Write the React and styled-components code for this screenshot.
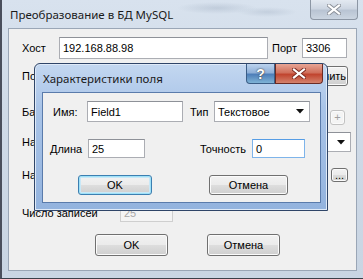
import React from "react";
import styled, { createGlobalStyle, css } from "styled-components";

const Global = createGlobalStyle`
  html, body { margin: 0; padding: 0; background: #2a2f3a; }
  body { width: 363px; height: 279px; overflow: hidden; }
  * { box-sizing: border-box; }
`;

const UI = `"Liberation Sans", Arial, sans-serif`;
const TITLE = `"Noto Sans", "Open Sans", sans-serif`;

const Window = styled.div`
  position: relative;
  width: 363px;
  height: 279px;
  display: flex;
  flex-direction: column;
  padding: 0 6px 7px 6px;
  background:
    radial-gradient(ellipse 40px 6px at 215px 8px, rgba(150,165,185,0.35), transparent),
    radial-gradient(ellipse 30px 5px at 265px 12px, rgba(150,165,185,0.3), transparent),
    linear-gradient(180deg, #d8e2ee 0%, #cfdae7 40%, #c9d5e3 100%);
  border-left: 2px solid #4a4f5c;
  border-bottom: 1px solid #3a3f4a;
`;

const TitleBar = styled.div`
  height: 28px;
  display: flex;
  align-items: center;
  font-family: ${TITLE};
  font-size: 11.5px;
  color: #1a1a1a;
`;

const TitleText = styled.span`
  margin-left: ${(p) => p.$ml || 0}px;
  white-space: nowrap;
`;

const CaptionBtn = styled.div`
  position: absolute;
  top: ${(p) => p.$top || 0}px;
  right: ${(p) => p.$right}px;
  width: ${(p) => p.$w}px;
  height: 20px;
  border: 1px solid ${(p) => (p.$kind === "close" ? "#6b2b23" : p.$kind === "help" ? "#3b5d86" : "#8c96a4")};
  border-top: none;
  border-radius: ${(p) => p.$radius || "0 0 4px 4px"};
  display: flex;
  align-items: center;
  justify-content: center;
  font-family: ${UI};
  font-weight: bold;
  font-size: 14px;
  color: #fff;
  ${(p) =>
    p.$kind === "close"
      ? css`background: linear-gradient(180deg, #e8a595 0%, #d0705c 45%, #c1452f 55%, #d4826c 100%);`
      : p.$kind === "help"
      ? css`background: linear-gradient(180deg, #bcd3ee 0%, #8fb0d8 45%, #4e7fb9 55%, #7fb3d6 100%);`
      : css`background: linear-gradient(180deg, #e3e9f1 0%, #cdd6e2 45%, #b9c4d3 55%, #cbd5e1 100%);`}
  text-shadow: 0 0 2px #555, 0 0 1px #333;
`;

const XIcon = ({ color = "#fff", stroke = "#6a6a6a" }) => (
  <svg width="14" height="11" viewBox="0 0 14 11">
    <path d="M2 1.5 L12 9.5 M12 1.5 L2 9.5" stroke={stroke} strokeWidth="4" strokeLinecap="square" />
    <path d="M2 1.5 L12 9.5 M12 1.5 L2 9.5" stroke={color} strokeWidth="2.2" strokeLinecap="square" />
  </svg>
);

const Client = styled.div`
  flex: 1;
  background: #f0f0f0;
  border: 1px solid #9aa6b6;
  display: flex;
  flex-direction: column;
  padding: 8px 0 0 0;
  font-family: ${UI};
  font-size: 11px;
  color: #000;
`;

const Row = styled.div`
  display: flex;
  align-items: center;
  height: ${(p) => p.$h || 22}px;
  margin-top: ${(p) => p.$mt || 0}px;
  padding-left: ${(p) => p.$pl || 0}px;
`;

const Label = styled.span`
  width: ${(p) => (p.$w ? p.$w + "px" : "auto")};
  margin-left: ${(p) => p.$ml || 0}px;
  white-space: nowrap;
  flex: none;
  color: ${(p) => (p.$disabled ? "#6d6d6d" : "#000")};
`;

const Input = styled.div`
  width: ${(p) => p.$w}px;
  height: ${(p) => p.$h || 20}px;
  margin-left: ${(p) => p.$ml || 0}px;
  flex: none;
  background: ${(p) => (p.$disabled ? "#f4f4f4" : "#fff")};
  border: 1px solid ${(p) => (p.$focus ? "#7eb4ea" : p.$disabled ? "#cfcfcf" : "#abadb3")};
  border-top-color: ${(p) => (p.$focus ? "#569de5" : p.$disabled ? "#cfcfcf" : "#8e9198")};
  display: flex;
  align-items: center;
  padding-left: 3px;
  font-family: ${UI};
  font-size: ${(p) => p.$fs || 11}px;
  color: ${(p) => (p.$disabled ? "#a8a8a8" : "#000")};
  white-space: nowrap;
  overflow: hidden;
`;

const Combo = styled(Input)`
  justify-content: space-between;
  padding-right: 5px;
`;

const Arrow = () => (
  <svg width="8" height="5" viewBox="0 0 8 5">
    <path d="M0 0 L8 0 L4 4.5 Z" fill="#111" />
  </svg>
);

const Button = styled.div`
  width: ${(p) => p.$w}px;
  height: ${(p) => p.$h || 21}px;
  margin-left: ${(p) => p.$ml || 0}px;
  margin-top: ${(p) => p.$mt || 0}px;
  flex: none;
  display: flex;
  align-items: center;
  justify-content: center;
  border: 1px solid ${(p) => (p.$default ? "#3c7fb1" : p.$disabled ? "#c2c2c2" : "#707070")};
  border-radius: 3px;
  background: ${(p) =>
    p.$disabled
      ? "#f4f4f4"
      : "linear-gradient(180deg, #f2f2f2 0%, #ebebeb 48%, #dddddd 52%, #cfcfcf 100%)"};
  box-shadow: ${(p) => (p.$default ? "inset 0 0 0 1px #48d6fb55, inset 0 0 0 2px #c9e8f7" : "inset 0 0 0 1px #fbfbfb")};
  font-family: ${UI};
  font-size: 11px;
  color: ${(p) => (p.$disabled ? "#a0a0a0" : "#000")};
  white-space: nowrap;
  overflow: hidden;
`;

/* Inner floating dialog */
const Dialog = styled.div`
  position: absolute;
  left: 32px;
  top: 63px;
  width: 294px;
  height: 148px;
  display: flex;
  flex-direction: column;
  padding: 0 6px 7px 7px;
  background: linear-gradient(180deg, #c3d7f0 0%, #a9c4e8 30%, #93b3de 100%);
  border: 1px solid #2f4568;
  border-radius: 6px 6px 0 0;
  box-shadow: inset 0 0 0 1px #dfeaf8;
`;

const DialogClient = styled.div`
  flex: 1;
  background: #f0f0f0;
  border: 1px solid #5a7bab;
  display: flex;
  flex-direction: column;
  font-family: ${UI};
  font-size: 11px;
  color: #000;
`;

export default function App() {
  return (
    <>
      <Global />
      <Window>
        <TitleBar>
          <TitleText $ml={2}>Преобразование в БД MySQL</TitleText>
        </TitleBar>
        <CaptionBtn $kind="inactive" $right={5} $w={48}>
          <XIcon color="#fff" stroke="#8a8f98" />
        </CaptionBtn>
        <Client>
          <Row $pl={13}>
            <Label $w={37}>Хост</Label>
            <Input $w={209} $h={22}>192.168.88.98</Input>
            <Label $ml={4}>Порт</Label>
            <Input $w={45} $ml={5}>3306</Input>
          </Row>
          <Row $mt={6} $pl={13}>
            <Label $w={100}>Пользователь</Label>
            <Input $w={120} />
            <Button $w={66} $h={20} $ml={40}>Подключить</Button>
          </Row>
          <Row $mt={14} $pl={13}>
            <Label $w={100}>База данных</Label>
            <Combo $w={180}><span /><Arrow /></Combo>
            <Button $w={15} $h={15} $ml={28} $mt={10} $disabled>+</Button>
          </Row>
          <Row $mt={8} $pl={13}>
            <Label $w={100}>Наименование таблицы</Label>
            <Combo $w={229}>
              <span />
              <Arrow />
            </Combo>
          </Row>
          <Row $mt={11} $pl={13}>
            <Label $w={100}>Наименование поля</Label>
            <Input $w={205} />
            <Button $w={17} $h={14} $ml={4}>...</Button>
          </Row>
          <Row $mt={16} $pl={13}>
            <Label $w={98}>Число записей</Label>
            <Input $w={53} $h={18} $disabled>25</Input>
          </Row>
          <Row $mt={10} $pl={86}>
            <Button $w={73} $h={22}>OK</Button>
            <Button $w={73} $h={22} $ml={39}>Отмена</Button>
          </Row>
        </Client>

        <Dialog>
          <TitleBar>
            <TitleText $ml={1}>Характеристики поля</TitleText>
          </TitleBar>
          <CaptionBtn $kind="help" $right={52} $w={29} $radius="0 0 0 4px">?</CaptionBtn>
          <CaptionBtn $kind="close" $right={4} $w={48} $radius="0 0 4px 0">
            <XIcon color="#fff" stroke="#7a2a20" />
          </CaptionBtn>
          <DialogClient>
            <Row $mt={8} $pl={10} $h={21}>
              <Label $w={34}>Имя:</Label>
              <Input $w={96} $h={21}>Field1</Input>
              <Label $ml={7} $w={24}>Тип</Label>
              <Combo $w={96} $h={21}>Текстовое<Arrow /></Combo>
            </Row>
            <Row $mt={17} $pl={7} $h={19}>
              <Label $w={38}>Длина</Label>
              <Input $w={57} $h={19}>25</Input>
              <Label $ml={55} $w={52}>Точность</Label>
              <Input $w={53} $h={19} $focus>0</Input>
            </Row>
            <Row $mt={17} $pl={35} $h={20}>
              <Button $w={74} $h={20} $default>OK</Button>
              <Button $w={79} $h={20} $ml={57}>Отмена</Button>
            </Row>
          </DialogClient>
        </Dialog>
      </Window>
    </>
  );
}
